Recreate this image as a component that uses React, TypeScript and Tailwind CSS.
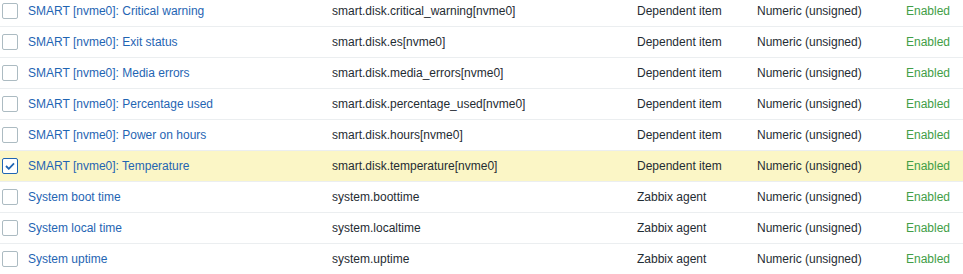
import React from "react";

type Item = {
  name: string;
  itemKey: string;
  type: string;
  valueType: string;
  status: string;
  checked?: boolean;
};

const items: Item[] = [
  { name: "SMART [nvme0]: Critical warning", itemKey: "smart.disk.critical_warning[nvme0]", type: "Dependent item", valueType: "Numeric (unsigned)", status: "Enabled" },
  { name: "SMART [nvme0]: Exit status", itemKey: "smart.disk.es[nvme0]", type: "Dependent item", valueType: "Numeric (unsigned)", status: "Enabled" },
  { name: "SMART [nvme0]: Media errors", itemKey: "smart.disk.media_errors[nvme0]", type: "Dependent item", valueType: "Numeric (unsigned)", status: "Enabled" },
  { name: "SMART [nvme0]: Percentage used", itemKey: "smart.disk.percentage_used[nvme0]", type: "Dependent item", valueType: "Numeric (unsigned)", status: "Enabled" },
  { name: "SMART [nvme0]: Power on hours", itemKey: "smart.disk.hours[nvme0]", type: "Dependent item", valueType: "Numeric (unsigned)", status: "Enabled" },
  { name: "SMART [nvme0]: Temperature", itemKey: "smart.disk.temperature[nvme0]", type: "Dependent item", valueType: "Numeric (unsigned)", status: "Enabled", checked: true },
  { name: "System boot time", itemKey: "system.boottime", type: "Zabbix agent", valueType: "Numeric (unsigned)", status: "Enabled" },
  { name: "System local time", itemKey: "system.localtime", type: "Zabbix agent", valueType: "Numeric (unsigned)", status: "Enabled" },
  { name: "System uptime", itemKey: "system.uptime", type: "Zabbix agent", valueType: "Numeric (unsigned)", status: "Enabled" },
];

function Checkbox({ checked }: { checked?: boolean }) {
  return (
    <span
      className={`ml-[2px] flex h-[16px] w-[16px] items-center justify-center rounded-[2px] border bg-white ${
        checked ? "border-[#1f65b3]" : "border-[#acbbc2]"
      }`}
    >
      {checked && (
        <svg width="10" height="8" viewBox="0 0 10 8" fill="none">
          <path d="M1 4l2.8 2.8L9 1.4" stroke="#1f65b3" strokeWidth="1.8" />
        </svg>
      )}
    </span>
  );
}

export default function App() {
  return (
    <div className="h-[274px] w-[963px] overflow-hidden bg-white font-['Liberation_Sans',Arial,sans-serif] text-[12px] text-[#1f2c33]">
      <div className="-mt-[4px]">
        {items.map((it) => (
          <div
            key={it.itemKey}
            className={`grid h-[31px] grid-cols-[28px_304px_305px_120px_149px_1fr] items-center border-b border-[#ebeef0] ${
              it.checked ? "bg-[#fbf6c6]" : ""
            }`}
          >
            <div className="flex items-center">
              <Checkbox checked={it.checked} />
            </div>
            <div className="text-[#1f65b3]">{it.name}</div>
            <div>{it.itemKey}</div>
            <div>{it.type}</div>
            <div>{it.valueType}</div>
            <div className="text-[#429e47]">{it.status}</div>
          </div>
        ))}
      </div>
    </div>
  );
}
